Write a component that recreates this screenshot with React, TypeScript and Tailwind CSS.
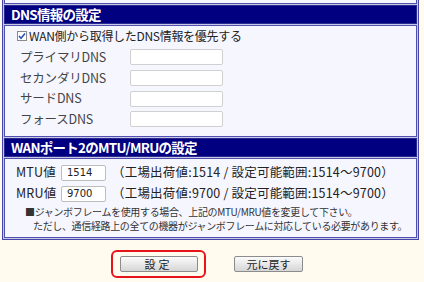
import React from "react";

const jp = { fontFamily: '"Noto Sans CJK JP", "Noto Sans", sans-serif' };

const Header = ({ title }: { title: string }) => (
  <div className="h-[19px] bg-[#000080] border border-[#2a2a90] flex items-center pl-[6px] text-white text-[13.5px] font-bold leading-none tracking-[-0.75px]">
    {title}
  </div>
);

const dnsRows = ["プライマリDNS", "セカンダリDNS", "サードDNS", "フォースDNS"];

const App = () => {
  return (
    <div className="w-[424px] h-[282px] overflow-hidden bg-[#fffcef] text-[#222]" style={jp}>
      <div className="ml-[2px] w-[417px] border border-t-0 border-[#4646a8] bg-[#c8c8e6] px-[1px] pb-[1px] flex flex-col gap-[1px]">
        {/* bottom edge of previous box */}
        <div className="h-[4px] bg-[#f6f6ff] border border-t-0 border-[#5050b0]"></div>

        <Header title="DNS情報の設定" />
        <div className="h-[112px] bg-[#f6f6ff] border border-[#5050b0] pt-[2px]">
          <div className="h-[16px] flex items-center pl-[12px] text-[12px] leading-none tracking-[-0.3px]">
            <span className="w-[10px] h-[10px] border border-[#8a8a8a] bg-white flex items-center justify-center mr-[2px]">
              <svg width="8" height="8" viewBox="0 0 8 8">
                <path d="M1 4 L3 6.2 L7 1.5" stroke="#2c4fb8" strokeWidth="1.6" fill="none" />
              </svg>
            </span>
            WAN側から取得したDNS情報を優先する
          </div>
          <div className="mt-[3px] flex flex-col">
            {dnsRows.map((label) => (
              <div key={label} className="h-[20.7px] flex items-center">
                <span className="w-[125px] pl-[15px] text-[12.5px] tracking-[-0.2px] text-[#444]">{label}</span>
                <span className="w-[93px] h-[16px] bg-white border border-[#d0d0d0] rounded-[2px]"></span>
              </div>
            ))}
          </div>
        </div>

        <Header title="WANポート2のMTU/MRUの設定" />
        <div className="h-[80px] bg-[#f6f6ff] border border-[#5050b0] pt-[3px]">
          {[
            ["MTU値", "1514"],
            ["MRU値", "9700"],
          ].map(([label, val]) => (
            <div key={label} className="h-[21px] flex items-center pl-[11px] text-[12.5px] tracking-[0.2px]">
              <span className="w-[45px]">{label}</span>
              <span className="w-[45px] h-[16px] bg-white border border-[#bdbdbd] rounded-[2px] flex items-center pl-[5px] text-[10px] tracking-normal" style={{ fontFamily: '"DejaVu Sans", sans-serif' }}>
                {val}
              </span>
              <span className="ml-[6px]">
                （工場出荷値:{val} / 設定可能範囲:1514〜9700）
              </span>
            </div>
          ))}
          <div className="pl-[20px] mt-[1px] text-[10px] leading-[14px] tracking-[-0.35px] text-[#333]">
            <div>■ジャンボフレームを使用する場合、上記のMTU/MRU値を変更して下さい。</div>
            <div className="pl-[8px]">ただし、通信経路上の全ての機器がジャンボフレームに対応している必要があります。</div>
          </div>
        </div>
      </div>

      <div className="mt-[10px] flex items-center">
        <div className="ml-[111px] w-[95px] h-[28px] border-[2px] border-[#e8141c] rounded-[6px] flex items-center justify-center">
          <button className="w-[78px] h-[16px] border border-[#8c8c8c] rounded-[2px] bg-gradient-to-b from-[#fbfbfb] to-[#d6d6d6] text-[11px] leading-none text-[#222] tracking-[3px]">
            設定
          </button>
        </div>
        <button className="ml-[28px] w-[69px] h-[16px] border border-[#8c8c8c] rounded-[2px] bg-gradient-to-b from-[#fbfbfb] to-[#d6d6d6] text-[11px] leading-none text-[#222]">
          元に戻す
        </button>
      </div>
    </div>
  );
};

export default App;
